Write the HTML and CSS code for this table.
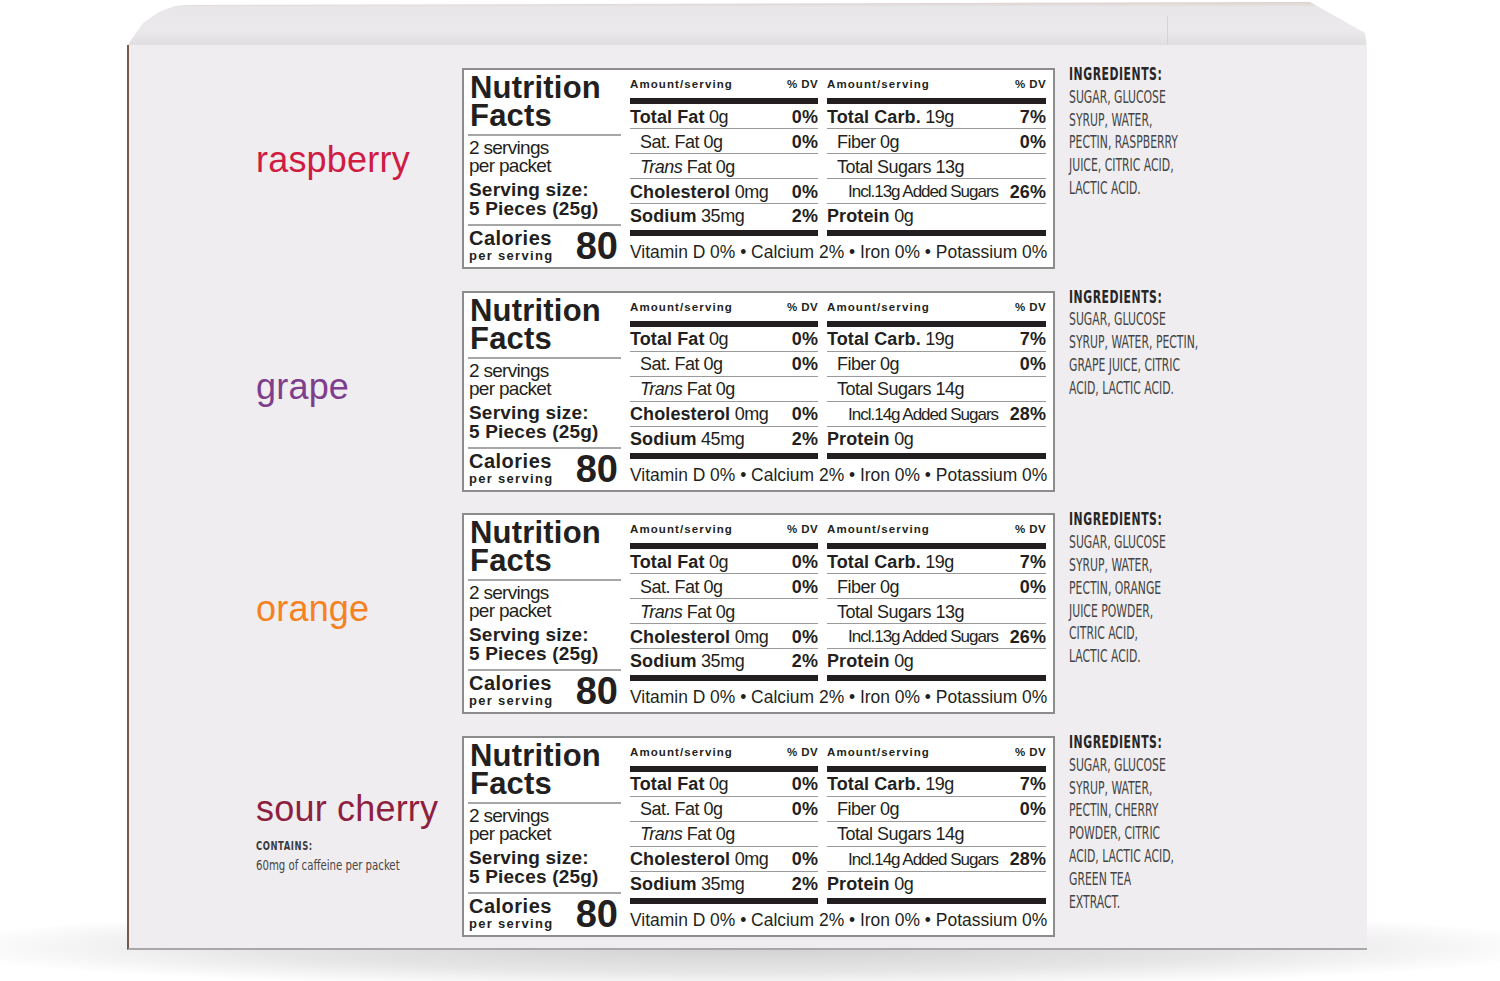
FILE: index.html
```html
<!DOCTYPE html>
<html lang="en">
<head>
<meta charset="utf-8">
<title>Nutrition Facts</title>
<link rel="stylesheet" href="styles.css">
</head>
<body>
<div class="scene">
  <div class="shadow"></div>
  <div class="flap"><div class="flap-line"></div></div>
  <div class="box">

    <div class="row">
      <div class="name-col first"><div class="name raspberry">raspberry</div></div>
      <div class="label">
        <div class="nf-left">
          <div class="nf-title"><span class="t-line">Nutrition</span><span class="t-line">Facts</span></div>
          <div class="nf-servings"><span class="s-line">2 servings</span><span class="s-line">per packet</span></div>
          <div class="nf-size"><span class="z-line">Serving size:</span><span class="z-line">5 Pieces (25g)</span></div>
          <div class="nf-cal"><div class="cal-text"><span class="cal-big">Calories</span><span class="cal-small">per serving</span></div><span class="cal-num">80</span></div>
        </div>
        <div class="nf-right">
          <div class="nf-cols">
            <div class="nf-col mid">
              <div class="nf-head"><span>Amount/serving</span><span>% DV</span></div>
              <div class="nf-row"><span><b>Total Fat</b> 0g</span><b>0%</b></div>
              <div class="nf-row ind"><span>Sat. Fat 0g</span><b>0%</b></div>
              <div class="nf-row ind"><span><i>Trans</i> Fat 0g</span></div>
              <div class="nf-row"><span><b>Cholesterol</b> 0mg</span><b>0%</b></div>
              <div class="nf-row last"><span><b>Sodium</b> 35mg</span><b>2%</b></div>
            </div>
            <div class="nf-col side">
              <div class="nf-head"><span>Amount/serving</span><span>% DV</span></div>
              <div class="nf-row"><span><b>Total Carb.</b> 19g</span><b>7%</b></div>
              <div class="nf-row ind"><span>Fiber 0g</span><b>0%</b></div>
              <div class="nf-row ind"><span>Total Sugars 13g</span></div>
              <div class="nf-row ind2"><span class="tight">Incl.13g Added Sugars</span><b>26%</b></div>
              <div class="nf-row last"><span><b>Protein</b> 0g</span></div>
            </div>
          </div>
          <div class="nf-vit">Vitamin D 0% • Calcium 2% • Iron 0% • Potassium 0%</div>
        </div>
      </div>
      <div class="ingr"><b>INGREDIENTS:</b><br>SUGAR, GLUCOSE<br>SYRUP, WATER,<br>PECTIN, RASPBERRY<br>JUICE, CITRIC ACID,<br>LACTIC ACID.</div>
    </div>

    <div class="row">
      <div class="name-col"><div class="name grape">grape</div></div>
      <div class="label">
        <div class="nf-left">
          <div class="nf-title"><span class="t-line">Nutrition</span><span class="t-line">Facts</span></div>
          <div class="nf-servings"><span class="s-line">2 servings</span><span class="s-line">per packet</span></div>
          <div class="nf-size"><span class="z-line">Serving size:</span><span class="z-line">5 Pieces (25g)</span></div>
          <div class="nf-cal"><div class="cal-text"><span class="cal-big">Calories</span><span class="cal-small">per serving</span></div><span class="cal-num">80</span></div>
        </div>
        <div class="nf-right">
          <div class="nf-cols">
            <div class="nf-col mid">
              <div class="nf-head"><span>Amount/serving</span><span>% DV</span></div>
              <div class="nf-row"><span><b>Total Fat</b> 0g</span><b>0%</b></div>
              <div class="nf-row ind"><span>Sat. Fat 0g</span><b>0%</b></div>
              <div class="nf-row ind"><span><i>Trans</i> Fat 0g</span></div>
              <div class="nf-row"><span><b>Cholesterol</b> 0mg</span><b>0%</b></div>
              <div class="nf-row last"><span><b>Sodium</b> 45mg</span><b>2%</b></div>
            </div>
            <div class="nf-col side">
              <div class="nf-head"><span>Amount/serving</span><span>% DV</span></div>
              <div class="nf-row"><span><b>Total Carb.</b> 19g</span><b>7%</b></div>
              <div class="nf-row ind"><span>Fiber 0g</span><b>0%</b></div>
              <div class="nf-row ind"><span>Total Sugars 14g</span></div>
              <div class="nf-row ind2"><span class="tight">Incl.14g Added Sugars</span><b>28%</b></div>
              <div class="nf-row last"><span><b>Protein</b> 0g</span></div>
            </div>
          </div>
          <div class="nf-vit">Vitamin D 0% • Calcium 2% • Iron 0% • Potassium 0%</div>
        </div>
      </div>
      <div class="ingr"><b>INGREDIENTS:</b><br>SUGAR, GLUCOSE<br>SYRUP, WATER, PECTIN,<br>GRAPE JUICE, CITRIC<br>ACID, LACTIC ACID.</div>
    </div>

    <div class="row">
      <div class="name-col"><div class="name orange">orange</div></div>
      <div class="label">
        <div class="nf-left">
          <div class="nf-title"><span class="t-line">Nutrition</span><span class="t-line">Facts</span></div>
          <div class="nf-servings"><span class="s-line">2 servings</span><span class="s-line">per packet</span></div>
          <div class="nf-size"><span class="z-line">Serving size:</span><span class="z-line">5 Pieces (25g)</span></div>
          <div class="nf-cal"><div class="cal-text"><span class="cal-big">Calories</span><span class="cal-small">per serving</span></div><span class="cal-num">80</span></div>
        </div>
        <div class="nf-right">
          <div class="nf-cols">
            <div class="nf-col mid">
              <div class="nf-head"><span>Amount/serving</span><span>% DV</span></div>
              <div class="nf-row"><span><b>Total Fat</b> 0g</span><b>0%</b></div>
              <div class="nf-row ind"><span>Sat. Fat 0g</span><b>0%</b></div>
              <div class="nf-row ind"><span><i>Trans</i> Fat 0g</span></div>
              <div class="nf-row"><span><b>Cholesterol</b> 0mg</span><b>0%</b></div>
              <div class="nf-row last"><span><b>Sodium</b> 35mg</span><b>2%</b></div>
            </div>
            <div class="nf-col side">
              <div class="nf-head"><span>Amount/serving</span><span>% DV</span></div>
              <div class="nf-row"><span><b>Total Carb.</b> 19g</span><b>7%</b></div>
              <div class="nf-row ind"><span>Fiber 0g</span><b>0%</b></div>
              <div class="nf-row ind"><span>Total Sugars 13g</span></div>
              <div class="nf-row ind2"><span class="tight">Incl.13g Added Sugars</span><b>26%</b></div>
              <div class="nf-row last"><span><b>Protein</b> 0g</span></div>
            </div>
          </div>
          <div class="nf-vit">Vitamin D 0% • Calcium 2% • Iron 0% • Potassium 0%</div>
        </div>
      </div>
      <div class="ingr"><b>INGREDIENTS:</b><br>SUGAR, GLUCOSE<br>SYRUP, WATER,<br>PECTIN, ORANGE<br>JUICE POWDER,<br>CITRIC ACID,<br>LACTIC ACID.</div>
    </div>

    <div class="row">
      <div class="name-col last-col">
        <div class="name cherry">sour cherry</div>
        <div class="contains">CONTAINS:</div>
        <div class="caffeine">60mg of caffeine per packet</div>
      </div>
      <div class="label">
        <div class="nf-left">
          <div class="nf-title"><span class="t-line">Nutrition</span><span class="t-line">Facts</span></div>
          <div class="nf-servings"><span class="s-line">2 servings</span><span class="s-line">per packet</span></div>
          <div class="nf-size"><span class="z-line">Serving size:</span><span class="z-line">5 Pieces (25g)</span></div>
          <div class="nf-cal"><div class="cal-text"><span class="cal-big">Calories</span><span class="cal-small">per serving</span></div><span class="cal-num">80</span></div>
        </div>
        <div class="nf-right">
          <div class="nf-cols">
            <div class="nf-col mid">
              <div class="nf-head"><span>Amount/serving</span><span>% DV</span></div>
              <div class="nf-row"><span><b>Total Fat</b> 0g</span><b>0%</b></div>
              <div class="nf-row ind"><span>Sat. Fat 0g</span><b>0%</b></div>
              <div class="nf-row ind"><span><i>Trans</i> Fat 0g</span></div>
              <div class="nf-row"><span><b>Cholesterol</b> 0mg</span><b>0%</b></div>
              <div class="nf-row last"><span><b>Sodium</b> 35mg</span><b>2%</b></div>
            </div>
            <div class="nf-col side">
              <div class="nf-head"><span>Amount/serving</span><span>% DV</span></div>
              <div class="nf-row"><span><b>Total Carb.</b> 19g</span><b>7%</b></div>
              <div class="nf-row ind"><span>Fiber 0g</span><b>0%</b></div>
              <div class="nf-row ind"><span>Total Sugars 14g</span></div>
              <div class="nf-row ind2"><span class="tight">Incl.14g Added Sugars</span><b>28%</b></div>
              <div class="nf-row last"><span><b>Protein</b> 0g</span></div>
            </div>
          </div>
          <div class="nf-vit">Vitamin D 0% • Calcium 2% • Iron 0% • Potassium 0%</div>
        </div>
      </div>
      <div class="ingr"><b>INGREDIENTS:</b><br>SUGAR, GLUCOSE<br>SYRUP, WATER,<br>PECTIN, CHERRY<br>POWDER, CITRIC<br>ACID, LACTIC ACID,<br>GREEN TEA<br>EXTRACT.</div>
    </div>

  </div>
</div>
</body>
</html>
```

FILE: styles.css
```css
* { box-sizing: border-box; }
html, body { margin: 0; padding: 0; }
body { background: #fff; font-family: "Liberation Sans", Arial, sans-serif; color: #231f20; }

.scene {
  position: relative;
  width: 1500px;
  height: 981px;
  overflow: hidden;
  background: #fff;
  padding: 45px 0 0 127px;
}

.shadow {
  position: absolute;
  left: -80px;
  top: 905px;
  width: 1660px;
  height: 84px;
  background: radial-gradient(ellipse at 50% 50%, rgba(60,60,60,0.24) 0%, rgba(60,60,60,0.13) 42%, rgba(60,60,60,0) 70%);
}

.flap {
  position: absolute;
  left: 127px;
  top: 2px;
  width: 1240px;
  height: 45px;
  background: linear-gradient(#d9d2cf 0, #e8e6e8 5px, #ebe9eb 28px, #e0dee0 43px, #d8d6d8 45px);
  clip-path: polygon(0 45px, 4px 38px, 16px 21px, 32px 10px, 48px 4px, 60px 3px, 1183px 0, 1238px 31px, 1240px 45px);
}
.flap-line {
  position: absolute;
  left: 1040px;
  top: 14px;
  width: 1px;
  height: 31px;
  background: #d5d3d5;
}

.box {
  position: relative;
  z-index: 1;
  width: 1240px;
  height: 905px;
  background: #efedef;
  border-left: 2px solid #735a4a;
  border-bottom: 2px solid #aaa7aa;
  padding-top: 23px;
}

.row {
  display: flex;
  height: 201px;
  margin-bottom: 21.67px;
}

.name-col {
  width: 333px;
  flex: none;
  padding-left: 127px;
  padding-top: 76px;
}
.name-col.first { padding-top: 72px; }
.name-col.last-col { padding-top: 53px; }

.name {
  font-size: 36px;
  line-height: 40px;
  letter-spacing: 0.2px;
  white-space: nowrap;
}
.raspberry { color: #cf1c43; }
.grape { color: #7f3d8e; }
.orange { color: #f5821f; }
.cherry { color: #8e1f40; }

.contains {
  margin-top: 10px;
  font-family: "Liberation Sans Narrow", "DejaVu Sans Condensed", sans-serif;
  font-weight: 700;
  font-size: 13px;
  line-height: 14px;
  letter-spacing: 0.8px;
  color: #3c3c3c;
  transform: scaleX(0.72);
  transform-origin: 0 0;
}
.caffeine {
  margin-top: 4px;
  font-family: "Liberation Sans Narrow", "DejaVu Sans Condensed", sans-serif;
  font-size: 14.5px;
  line-height: 16px;
  color: #454545;
  white-space: nowrap;
  transform: scaleX(0.78);
  transform-origin: 0 0;
}

/* Nutrition label */
.label {
  flex: none;
  width: 593px;
  height: 201px;
  background: #fff;
  border: 2px solid #8c8c8c;
  padding: 0 7px 0 4px;
  display: flex;
  gap: 9px;
}

.nf-left {
  width: 153px;
  flex: none;
  display: flex;
  flex-direction: column;
}
.nf-title {
  display: flex;
  flex-direction: column;
  font-weight: 700;
  font-size: 31px;
  padding: 4px 0 4px 2px;
  border-bottom: 2px solid #a6a6a6;
  letter-spacing: 0.2px;
}
.t-line { display: block; height: 28px; line-height: 28px; }
.nf-servings {
  display: flex;
  flex-direction: column;
  font-size: 19px;
  letter-spacing: -0.7px;
  padding: 3px 0 0 1px;
}
.s-line { display: block; height: 18px; line-height: 18px; }
.nf-size {
  display: flex;
  flex-direction: column;
  font-weight: 700;
  font-size: 19px;
  letter-spacing: 0.2px;
  padding: 5px 0 6px 1px;
  border-bottom: 2px solid #a6a6a6;
}
.z-line { display: block; height: 19px; line-height: 19px; }
.nf-cal {
  display: flex;
  align-items: center;
  justify-content: space-between;
  padding: 1px 3px 0 1px;
}
.cal-text { display: flex; flex-direction: column; }
.cal-big { display: block; font-weight: 700; font-size: 20px; line-height: 19px; height: 19px; letter-spacing: 0.5px; }
.cal-small { display: block; font-weight: 700; font-size: 13px; line-height: 15px; height: 15px; letter-spacing: 1.3px; }
.cal-num { font-weight: 700; font-size: 38px; line-height: 38px; }

.nf-right {
  width: 416px;
  flex: none;
  display: flex;
  flex-direction: column;
}
.nf-cols { display: flex; gap: 9px; }
.nf-col.mid { width: 188px; }
.nf-col.side { width: 219px; }

.nf-head {
  height: 34px;
  border-bottom: 6px solid #231f20;
  display: flex;
  justify-content: space-between;
  align-items: flex-start;
  padding-top: 8px;
  font-weight: 700;
  font-size: 11.5px;
  letter-spacing: 1.1px;
}
.nf-head span:last-child { letter-spacing: 0.4px; }
.nf-row {
  height: 25px;
  border-bottom: 1px solid #9a9a9a;
  display: flex;
  justify-content: space-between;
  align-items: center;
  padding-top: 2px;
  font-size: 18px;
  letter-spacing: -0.5px;
  white-space: nowrap;
}
.nf-row b { letter-spacing: 0.1px; }
.nf-row.ind { padding-left: 10px; }
.nf-row.ind2 { padding-left: 21px; }
.nf-row.last { height: 32px; border-bottom: 6px solid #231f20; padding-bottom: 1px; padding-top: 0; }
.nf-row .tight { font-size: 17px; letter-spacing: -1px; }

.nf-vit {
  height: 31px;
  line-height: 33px;
  font-size: 17.45px;
  white-space: nowrap;
}

.ingr {
  margin: -5px 0 0 14px;
  font-family: "Liberation Sans Narrow", "DejaVu Sans Condensed", sans-serif;
  font-size: 18px;
  line-height: 22.8px;
  color: #444;
  white-space: nowrap;
  transform: scaleX(0.67);
  transform-origin: 0 0;
}
.ingr b { color: #262626; letter-spacing: 0.8px; }
```
